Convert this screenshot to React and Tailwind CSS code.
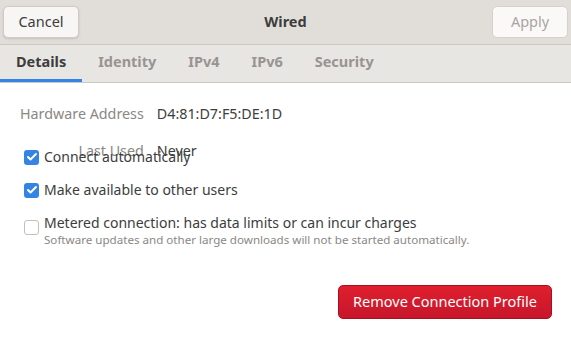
import { Check } from "lucide-react";

const TABS = ["Details", "Identity", "IPv4", "IPv6", "Security"];

function Box({ checked }) {
    return checked ? (
        <span className="w-[15px] h-[15px] rounded-[3px] bg-[#3584e4] flex items-center justify-center shrink-0">
            <Check size={12} strokeWidth={4} className="text-white" />
        </span>
    ) : (
        <span className="block w-[15px] h-[15px] rounded-[3px] bg-white border border-[#c4bfba] shrink-0" />
    );
}

export default function App() {
    return (
        <div className="w-[571px] h-[345px] bg-white flex flex-col text-[#3d3d3d]" style={{ fontFamily: '"Noto Sans", sans-serif' }}>
            <header className="h-[45px] shrink-0 bg-[#e1deda] border-b border-[#cdc7c2] flex items-center justify-between px-[3px] relative">
                <button className="h-[32px] w-[76px] rounded-[5px] bg-[#f7f6f5] border border-[#d0cbc6] text-[14.5px] text-[#3d3d3d] shadow-sm">
                    Cancel
                </button>
                <span className="absolute left-1/2 -translate-x-1/2 text-[14.5px] font-bold text-[#3d3d3d]">Wired</span>
                <button className="h-[32px] w-[76px] rounded-[5px] bg-[#faf9f8] border border-[#d6d1cc] text-[14.5px] text-[#a7a5a3]">
                    Apply
                </button>
            </header>

            <nav className="h-[38px] shrink-0 bg-[#e8e6e3] border-b border-[#cdc7c2] flex items-stretch">
                {TABS.map((t, i) => (
                    <div
                        key={t}
                        className={`flex items-center px-[16px] text-[14.5px] font-bold border-b-[3px] ${i === 0 ? "border-[#3584e4] text-[#3d3d3d]" : "border-transparent text-[#989491]"}`}
                    >
                        {t}
                    </div>
                ))}
            </nav>

            <main className="flex-1 flex flex-col">
                <div className="grid grid-cols-[auto_auto] justify-start gap-x-[13px] gap-y-[17px] pl-[20px] pt-[21px] text-[14.3px] leading-[20px]">
                    <span className="text-right text-[#8b8784]">Hardware Address</span>
                    <span className="text-[#3d3d3d]">D4:81:D7:F5:DE:1D</span>
                    <span className="text-right text-[#8b8784]">Last Used</span>
                    <span className="text-[#3d3d3d]">Never</span>
                </div>

                <div className="flex flex-col pl-[24px] -mt-[14px] text-[14px] leading-[20px] text-[#3d3d3d]">
                    <label className="flex items-center gap-[5px] h-[20px]">
                        <Box checked />
                        <span>Connect automatically</span>
                    </label>
                    <label className="flex items-center gap-[5px] h-[20px] mt-[13px]">
                        <Box checked />
                        <span>Make available to other users</span>
                    </label>
                    <label className="flex items-start gap-[5px] mt-[13px]">
                        <span className="flex mt-[7px]"><Box /></span>
                        <span className="flex flex-col">
                            <span>Metered connection: has data limits or can incur charges</span>
                            <span className="text-[11.6px] leading-[13px] text-[#8b8784]">
                                Software updates and other large downloads will not be started automatically.
                            </span>
                        </span>
                    </label>
                </div>

                <div className="flex justify-end pr-[19px] mt-[39px]">
                    <button className="h-[34px] w-[214px] rounded-[5px] bg-gradient-to-b from-[#df1f2e] to-[#c7162b] border border-[#a81020] text-white text-[14.5px]">
                        Remove Connection Profile
                    </button>
                </div>
            </main>
        </div>
    );
}
